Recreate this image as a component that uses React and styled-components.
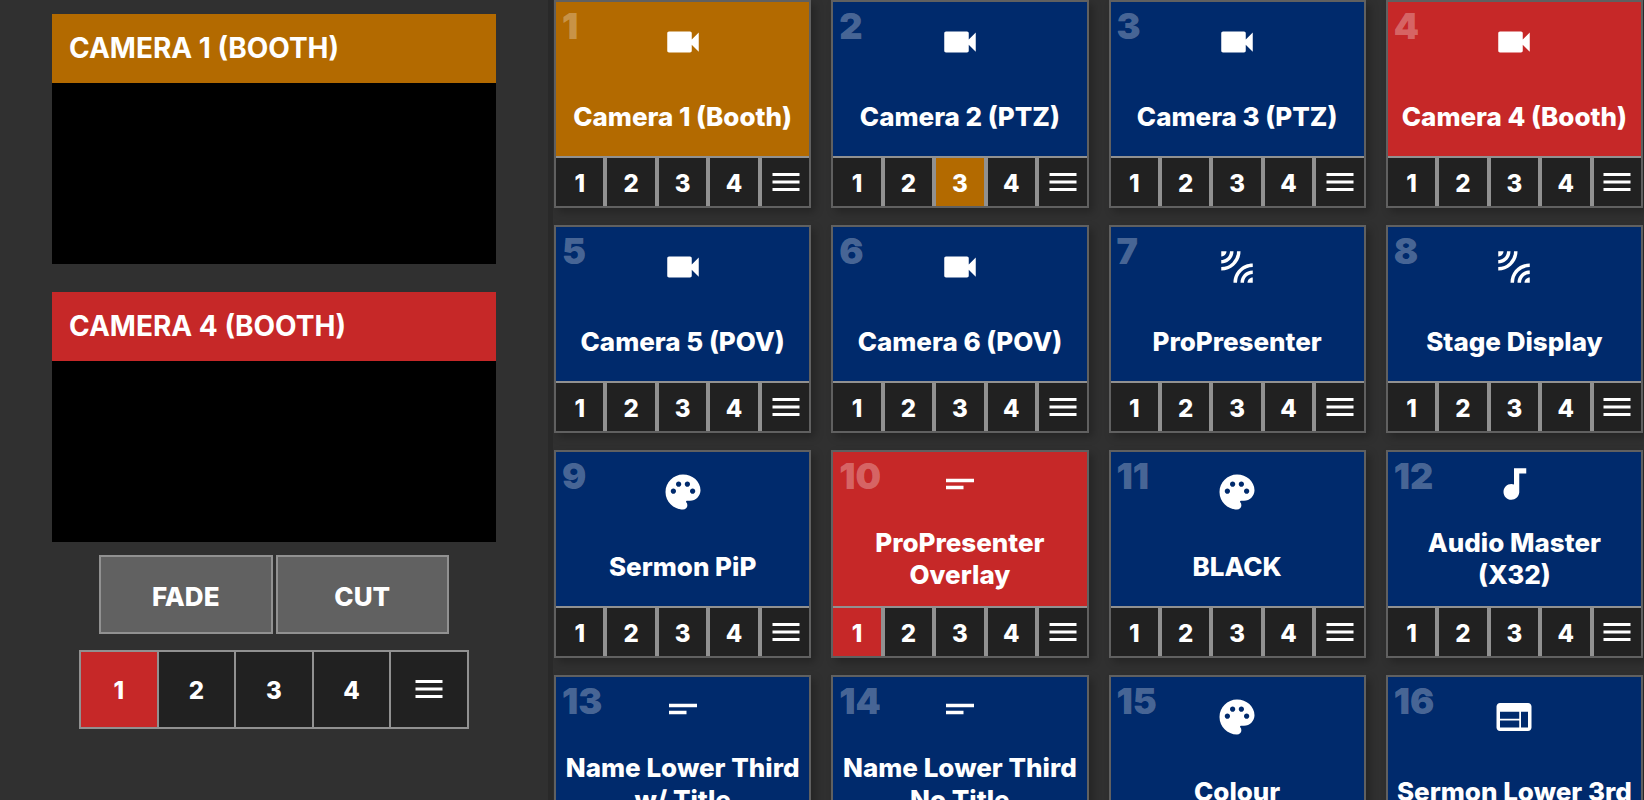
import React, {useState} from 'react';
import styled, {createGlobalStyle} from 'styled-components'
import {MdVideocam, MdLeakAdd, MdPalette, MdShortText, MdAudiotrack, MdWeb, MdMenu} from 'react-icons/md'

const GlobalStyle = createGlobalStyle`
* {
    box-sizing: border-box;
}
body {
    margin: 0;
    background: #303030;
    color: white;
    font-family: Inter, "Liberation Sans", sans-serif;
    font-weight: 800;
}
button {
    margin: 0;
    padding: 0;
    color: inherit;
    font: inherit;
    cursor: pointer;
}
`

const colors = {
    idle: '#002a6c',
    preview: '#b36a00',
    program: '#c62828',
    dark: '#212121',
}

const Page = styled.div`
display: grid;
grid-template-columns: 1fr 2fr;
height: 100vh;
overflow: hidden;
`

const Side = styled.aside`
display: flex;
flex-direction: column;
align-items: center;
padding: 14px 52px;
`

const Monitor = styled.section`
width: 100%;
aspect-ratio: 16 / 9;
margin-bottom: 28px;
background: black;
& + & {
    margin-bottom: 13px;
}
`

const MonitorTitle = styled.h2`
margin: 0;
padding: 0 17px;
background: ${props => colors[props.$state]};
font-size: 28px;
font-weight: 700;
line-height: 69px;
text-transform: uppercase;
`

const Transitions = styled.div`
display: flex;
gap: 3px;
width: 350px;
margin-bottom: 16px;
`

const TransitionButton = styled.button`
flex: 1;
height: 79px;
padding-top: 4px;
border: 2px solid #919191;
background: #616161;
font-size: 26px;
text-transform: uppercase;
`

const MasterKeys = styled.div`
display: flex;
width: 390px;
height: 79px;
border: 1px solid #919191;
`

const Key = styled.button`
display: flex;
flex: 1;
align-items: center;
justify-content: center;
padding-top: 2px;
border: 1px solid #919191;
background: ${props => colors[props.$state]};
font-size: 24px;
`

const MenuKey = styled(Key)`
padding-top: 0;
`

const Sources = styled.main`
display: grid;
grid-template-columns: repeat(4, 1fr);
grid-auto-rows: 208px;
gap: 17px 20px;
padding: 0 1px;
border-left: 5px solid #292929;
overflow-y: auto;
scrollbar-width: none;
`

const Card = styled.article`
display: flex;
flex-direction: column;
border: 2px solid #606060;
box-shadow: 4px 4px 8px rgba(0,0,0,0.25);
`

const Face = styled.button`
position: relative;
display: flex;
flex-direction: column;
align-items: center;
justify-content: space-around;
height: 154px;
padding: 0 6px 4px;
border: 0;
background: ${props => colors[props.$state]};
font-size: 26px;
line-height: 32px;
`

const Number = styled.span`
position: absolute;
top: 4px;
left: 6px;
color: rgba(255,255,255,0.3);
font-size: 36px;
font-weight: 900;
line-height: 40px;
`

const CardKeys = styled.div`
display: flex;
flex: 1;
${Key} {
    border-width: 2px 2px 0;
}
${Key}:first-child {
    border-left: 0;
}
${Key}:last-child {
    border-right: 0;
}
`

const sources = [
    {id: 1, name: 'Camera 1 (Booth)', icon: MdVideocam, state: 'preview'},
    {id: 2, name: 'Camera 2 (PTZ)', icon: MdVideocam, keys: {3: 'preview'}},
    {id: 3, name: 'Camera 3 (PTZ)', icon: MdVideocam},
    {id: 4, name: 'Camera 4 (Booth)', icon: MdVideocam, state: 'program'},
    {id: 5, name: 'Camera 5 (POV)', icon: MdVideocam},
    {id: 6, name: 'Camera 6 (POV)', icon: MdVideocam},
    {id: 7, name: 'ProPresenter', icon: MdLeakAdd},
    {id: 8, name: 'Stage Display', icon: MdLeakAdd},
    {id: 9, name: 'Sermon PiP', icon: MdPalette},
    {id: 10, name: 'ProPresenter Overlay', icon: MdShortText, state: 'program', keys: {1: 'program'}},
    {id: 11, name: 'BLACK', icon: MdPalette},
    {id: 12, name: 'Audio Master (X32)', icon: MdAudiotrack},
    {id: 13, name: 'Name Lower Third w/ Title', icon: MdShortText},
    {id: 14, name: 'Name Lower Third No Title', icon: MdShortText},
    {id: 15, name: 'Colour', icon: MdPalette},
    {id: 16, name: 'Sermon Lower 3rd', icon: MdWeb},
]

const Keys = ({active = {}, onSelect}) => (
    <>
        {[1, 2, 3, 4].map(n =>
            <Key key={n} $state={active[n] || 'dark'} onClick={() => onSelect && onSelect(n)}>{n}</Key>
        )}
        <MenuKey $state='dark' aria-label='More'><MdMenu size={36}/></MenuKey>
    </>
)

const Source = ({source}) => {
    const Icon = source.icon
    return (
        <Card>
            <Face $state={source.state || 'idle'}>
                <Number>{source.id}</Number>
                <Icon size={42}/>
                <span>{source.name}</span>
            </Face>
            <CardKeys>
                <Keys active={source.keys}/>
            </CardKeys>
        </Card>
    )
}

const App = () => {
    const [master, setMaster] = useState(1)

    return (
        <Page>
            <GlobalStyle/>
            <Side>
                <Monitor>
                    <MonitorTitle $state='preview'>Camera 1 (Booth)</MonitorTitle>
                </Monitor>
                <Monitor>
                    <MonitorTitle $state='program'>Camera 4 (Booth)</MonitorTitle>
                </Monitor>
                <Transitions>
                    <TransitionButton>Fade</TransitionButton>
                    <TransitionButton>Cut</TransitionButton>
                </Transitions>
                <MasterKeys>
                    <Keys active={{[master]: 'program'}} onSelect={setMaster}/>
                </MasterKeys>
            </Side>
            <Sources>
                {sources.map(source => <Source key={source.id} source={source}/>)}
            </Sources>
        </Page>
    );
};

export default App;
